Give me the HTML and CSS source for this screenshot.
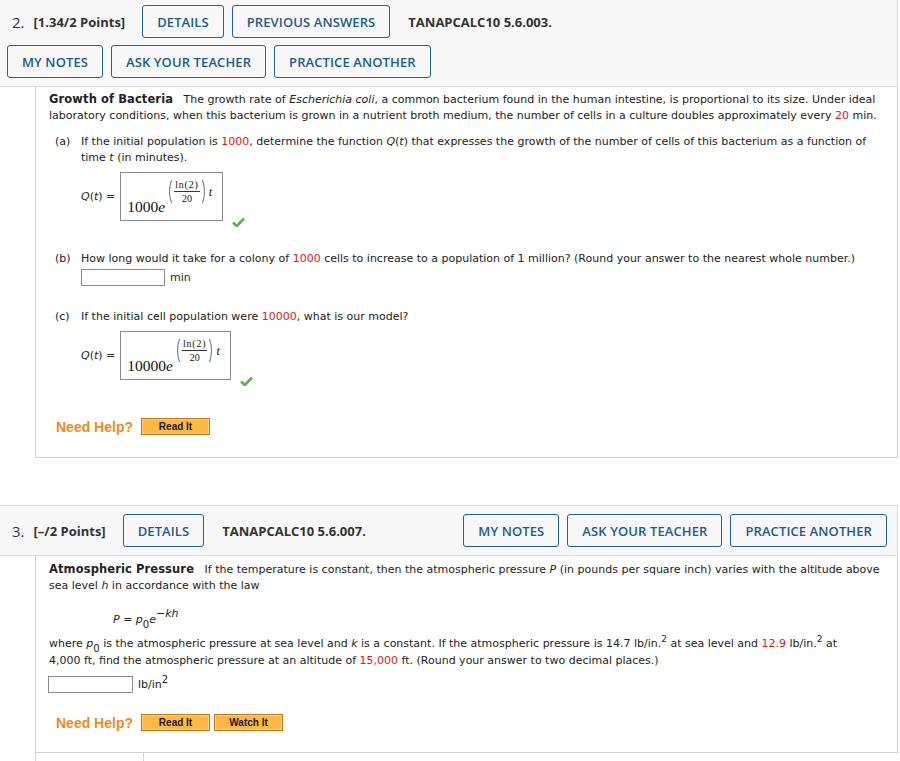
FILE: index.html
```html
<!DOCTYPE html>
<html>
<head>
<meta charset="utf-8">
<link rel="stylesheet" href="styles.css">
</head>
<body>
<div class="q">
  <div class="qhead first">
    <div class="qleft">
      <span class="qnum">2.</span>
      <span class="qpts">[1.34/2 Points]</span>
      <span class="btn gap-l">DETAILS</span>
      <span class="btn">PREVIOUS ANSWERS</span>
      <span class="qcode">TANAPCALC10 5.6.003.</span>
    </div>
    <div class="qactions">
      <span class="btn">MY NOTES</span>
      <span class="btn">ASK YOUR TEACHER</span>
      <span class="btn">PRACTICE ANOTHER</span>
    </div>
  </div>
  <div class="qbody b1">
    <p class="intro"><b>Growth of Bacteria</b>&nbsp;&nbsp; The growth rate of <i>Escherichia coli</i>, a common bacterium found in the human intestine, is proportional to its size. Under ideal laboratory conditions, when this bacterium is grown in a nutrient broth medium, the number of cells in a culture doubles approximately every <span class="red">20</span> min.</p>

    <div class="part pa">
      <span class="plabel">(a)</span>
      <div class="ptext">If the initial population is <span class="red">1000</span>, determine the function <i>Q</i>(<i>t</i>) that expresses the growth of the number of cells of this bacterium as a function of time <i>t</i> (in minutes).</div>
    </div>
    <div class="mathrow">
      <span class="qlabel"><i>Q</i>(<i>t</i>) =</span>
      <div class="mbox">
        <span class="mbase">1000<i>e</i></span>
        <span class="mexp">
          <svg class="paren" width="5" height="25" viewBox="0 0 5 25"><path d="M4.5 1 Q0.5 12.5 4.5 24" fill="none" stroke="#5b6f92" stroke-width="1"/></svg>
          <span class="frac"><span class="fnum">ln(2)</span><span class="fden">20</span></span>
          <svg class="paren" width="5" height="25" viewBox="0 0 5 25"><path d="M0.5 1 Q4.5 12.5 0.5 24" fill="none" stroke="#5b6f92" stroke-width="1"/></svg>
          <i class="mt">t</i>
        </span>
      </div>
      <svg class="check" width="13" height="10" viewBox="0 0 13 10"><path d="M1 5.5 L4.8 9 L12 1.5" fill="none" stroke="#5fae57" stroke-width="2.6" stroke-linejoin="round"/></svg>
    </div>

    <div class="part pb">
      <span class="plabel">(b)</span>
      <div class="ptext">How long would it take for a colony of <span class="red">1000</span> cells to increase to a population of 1 million? (Round your answer to the nearest whole number.)</div>
    </div>
    <div class="ansrow ind">
      <span class="ans"></span><span class="unit">min</span>
    </div>

    <div class="part pc">
      <span class="plabel">(c)</span>
      <div class="ptext">If the initial cell population were <span class="red">10000</span>, what is our model?</div>
    </div>
    <div class="mathrow">
      <span class="qlabel"><i>Q</i>(<i>t</i>) =</span>
      <div class="mbox">
        <span class="mbase">10000<i>e</i></span>
        <span class="mexp">
          <svg class="paren" width="5" height="25" viewBox="0 0 5 25"><path d="M4.5 1 Q0.5 12.5 4.5 24" fill="none" stroke="#5b6f92" stroke-width="1"/></svg>
          <span class="frac"><span class="fnum">ln(2)</span><span class="fden">20</span></span>
          <svg class="paren" width="5" height="25" viewBox="0 0 5 25"><path d="M0.5 1 Q4.5 12.5 0.5 24" fill="none" stroke="#5b6f92" stroke-width="1"/></svg>
          <i class="mt">t</i>
        </span>
      </div>
      <svg class="check" width="13" height="10" viewBox="0 0 13 10"><path d="M1 5.5 L4.8 9 L12 1.5" fill="none" stroke="#5fae57" stroke-width="2.6" stroke-linejoin="round"/></svg>
    </div>

    <div class="help h1">
      <span class="needhelp">Need Help?</span>
      <span class="hbtn">Read It</span>
    </div>
  </div>
</div>

<div class="q q2">
  <div class="qhead">
    <div class="qleft">
      <span class="qnum">3.</span>
      <span class="qpts">[&ndash;/2 Points]</span>
      <span class="btn gap-l">DETAILS</span>
      <span class="qcode">TANAPCALC10 5.6.007.</span>
    </div>
    <div class="qactions">
      <span class="btn">MY NOTES</span>
      <span class="btn">ASK YOUR TEACHER</span>
      <span class="btn">PRACTICE ANOTHER</span>
    </div>
  </div>
  <div class="qbody b2">
    <p class="intro"><b>Atmospheric Pressure</b>&nbsp;&nbsp; If the temperature is constant, then the atmospheric pressure <i>P</i> (in pounds per square inch) varies with the altitude above sea level <i>h</i> in accordance with the law</p>
    <div class="law"><i>P</i> = <i>p</i><sub>0</sub><i>e</i><sup>&minus;<i>kh</i></sup></div>
    <p class="where">where <i>p</i><sub>0</sub> is the atmospheric pressure at sea level and <i>k</i> is a constant. If the atmospheric pressure is 14.7 lb/in.<sup>2</sup> at sea level and <span class="red">12.9</span> lb/in.<sup>2</sup> at 4,000 ft, find the atmospheric pressure at an altitude of <span class="red">15,000</span> ft. (Round your answer to two decimal places.)</p>
    <div class="ansrow a2">
      <span class="ans"></span><span class="unit">lb/in<sup>2</sup></span>
    </div>
    <div class="help h2">
      <span class="needhelp">Need Help?</span>
      <span class="hbtn">Read It</span>
      <span class="hbtn">Watch It</span>
    </div>
  </div>
  <div class="next"><div class="nextcell"></div></div>
</div>
</body>
</html>
```

FILE: styles.css
```css
html, body {
  margin: 0;
  padding: 0;
  background: #ffffff;
}
body {
  width: 900px;
  font-family: "DejaVu Sans", Verdana, sans-serif;
  color: #222222;
}

.qhead {
  width: 898px;
  box-sizing: border-box;
  display: flex;
  flex-wrap: wrap;
  justify-content: space-between;
  align-items: center;
  row-gap: 7px;
  padding: 8px 10px 8px 7px;
  background: #f7f7f7;
  border-top: 1px solid #dcdcdc;
  border-right: 1px solid #dcdcdc;
  border-bottom: 1px solid #dcdcdc;
  font-family: "Open Sans", "Liberation Sans", sans-serif;
}
.qhead.first {
  border-top: none;
  padding-top: 5px;
}
.qleft, .qactions {
  display: flex;
  align-items: center;
  gap: 8px;
}
.qnum {
  margin-left: 5px;
  font-size: 15px;
  color: #333333;
}
.qpts {
  margin-left: 1px;
  font-size: 13px;
  font-weight: 700;
  color: #333333;
}
.qcode {
  margin-left: 10px;
  font-size: 13px;
  font-weight: 700;
  color: #333333;
}
.btn {
  box-sizing: border-box;
  height: 33px;
  display: inline-flex;
  align-items: center;
  padding: 0 14px;
  border: 1px solid #1a64a0;
  border-radius: 3px;
  font-size: 13px;
  font-weight: 600;
  color: #1d5b8d;
  letter-spacing: 0.1px;
}
.gap-l {
  margin-left: 9px;
}

.qbody {
  width: 863px;
  box-sizing: border-box;
  margin-left: 35px;
  border-left: 1px solid #d2d2d2;
  border-right: 1px solid #d2d2d2;
  border-bottom: 1px solid #d2d2d2;
  font-size: 11px;
  line-height: 16px;
  padding: 5px 13px 22px 13px;
}
.qbody b {
  font-size: 11.5px;
  line-height: 1;
  letter-spacing: 0.1px;
}
.b2 {
  padding-top: 6px;
  padding-bottom: 21px;
}
.intro {
  margin: 0;
}
.red {
  color: #ee1111;
}
.part {
  display: flex;
  padding-left: 6px;
}
.plabel {
  width: 26px;
  flex: none;
}
.pa {
  margin-top: 10px;
}
.pb {
  margin-top: 30px;
}
.pc {
  margin-top: 23px;
}

.mathrow {
  display: flex;
  align-items: flex-end;
  margin-top: 6px;
  padding-left: 32px;
}
.qlabel {
  align-self: center;
  margin-right: 5px;
  font-size: 11px;
}
.mbox {
  box-sizing: border-box;
  height: 49px;
  display: flex;
  align-items: flex-start;
  padding: 6px 10px 0 6px;
  border: 1px solid #8a8a8a;
  font-family: "Liberation Serif", "Times New Roman", serif;
  color: #111111;
}
.mbase {
  font-size: 15.5px;
  line-height: 16px;
  margin-top: 20px;
}
.mbase i {
  font-style: italic;
}
.mexp {
  display: flex;
  align-items: center;
  height: 25px;
  margin-left: 2px;
}
.frac {
  display: flex;
  flex-direction: column;
  align-items: center;
  margin: 0 2px;
  font-size: 10px;
  line-height: 10px;
}
.fnum {
  padding: 0 1px 1px 1px;
  letter-spacing: 0.8px;
  border-bottom: 1px solid #333333;
}
.fden {
  padding-top: 2px;
}
.mt {
  align-self: flex-start;
  margin-top: 7px;
  margin-left: 2px;
  font-size: 12px;
  line-height: 12px;
}
.check {
  margin-left: 9px;
  margin-bottom: -6px;
}

.ansrow {
  display: flex;
  align-items: center;
  margin-top: 2px;
}
.ind {
  padding-left: 32px;
}
.ans {
  box-sizing: border-box;
  width: 84px;
  height: 17px;
  border: 1px solid #8a8a8a;
  background: #ffffff;
}
.unit {
  margin-left: 5px;
}
.a2 {
  margin-top: 7px;
}
.a2 .ans {
  margin-left: -1px;
  width: 85px;
}
.unit sup {
  font-size: 10px;
  line-height: 0;
}

.help {
  display: flex;
  align-items: center;
  gap: 4px;
  padding-left: 7px;
}
.h1 {
  margin-top: 38px;
}
.h2 {
  margin-top: 21px;
}
.needhelp {
  font-family: "Liberation Sans", Arial, sans-serif;
  font-weight: 700;
  font-size: 14px;
  color: #f0891c;
  margin-right: 4px;
}
.hbtn {
  box-sizing: border-box;
  width: 69px;
  height: 17px;
  display: inline-flex;
  align-items: center;
  justify-content: center;
  background: #fdb845;
  border: 1px solid #c4761f;
  box-shadow: inset 0 0 0 1px #ffd27a;
  font-family: "Liberation Sans", Arial, sans-serif;
  font-weight: 700;
  font-size: 10px;
  color: #1a1a1a;
}

.q2 {
  margin-top: 47px;
}

.law {
  margin-top: 18px;
  padding-left: 64px;
  font-size: 11px;
  line-height: 16px;
}
.law sub, .where sub {
  font-size: 10px;
  line-height: 0;
  vertical-align: -5px;
}
.law sup {
  font-size: 11px;
  line-height: 0;
  vertical-align: 6px;
}
.where {
  margin: 7px 0 0 0;
  padding-right: 36px;
  line-height: 17px;
}
.where sup {
  font-size: 9px;
  line-height: 0;
}

.next {
  margin-left: 35px;
  height: 12px;
  border-left: 1px solid #d2d2d2;
}
.nextcell {
  width: 107px;
  height: 100%;
  border-right: 1px solid #d2d2d2;
}
```
